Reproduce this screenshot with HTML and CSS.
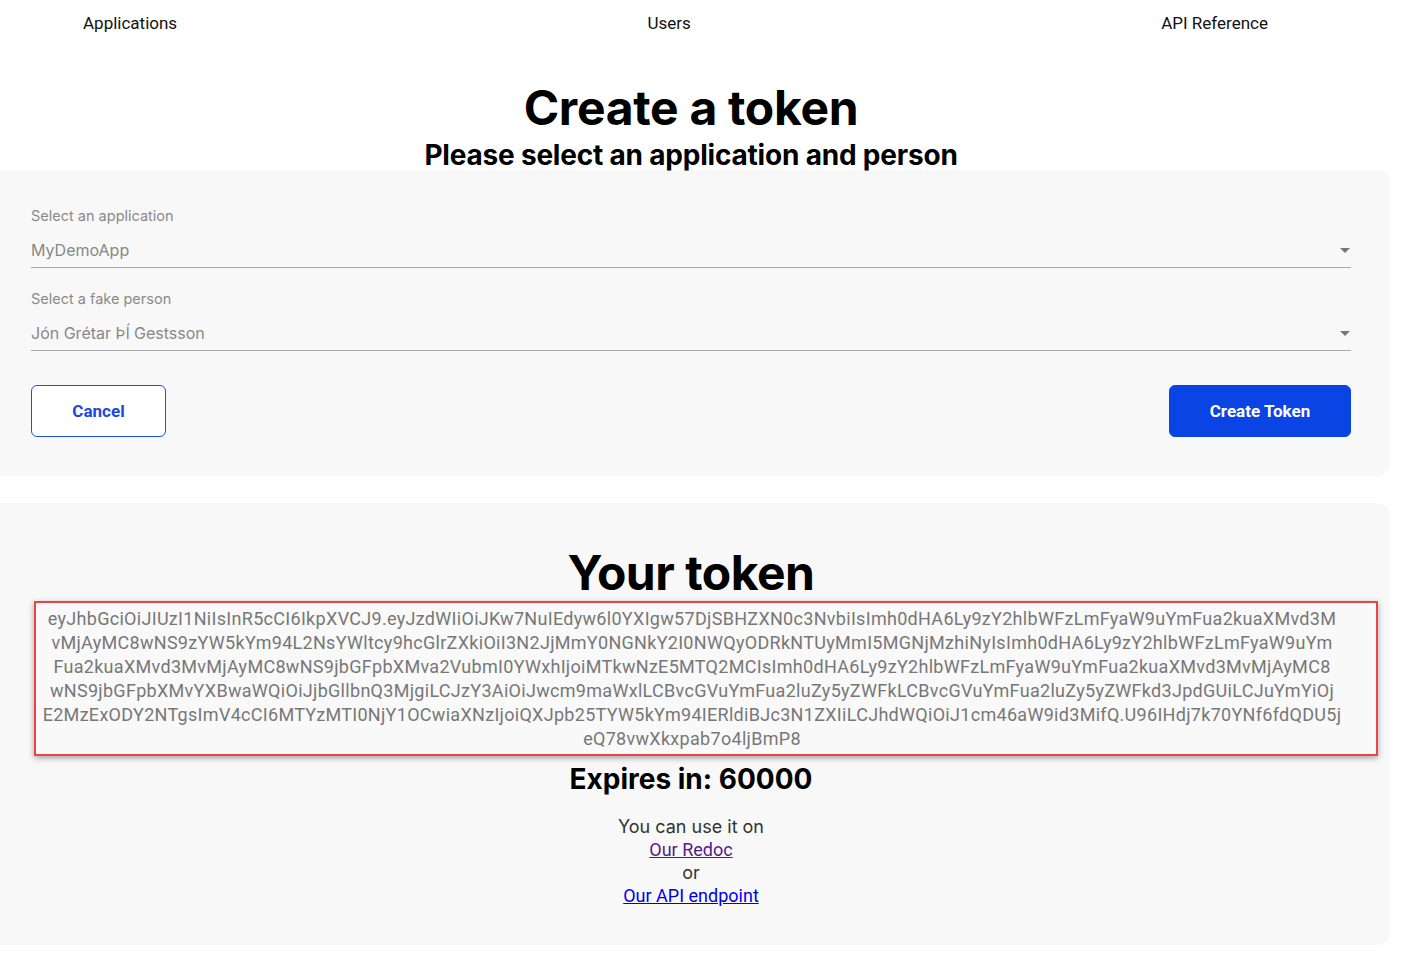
FILE: index.html
```html
<!DOCTYPE html>
<html lang="en">
<head>
<meta charset="utf-8">
<title>Create a token</title>
<link rel="stylesheet" href="styles.css">
</head>
<body>
<nav class="topnav">
  <a class="nav-link" href="#">Applications</a>
  <a class="nav-link" href="#">Users</a>
  <a class="nav-link" href="#">API Reference</a>
</nav>

<header class="page-head">
  <h1 class="page-title">Create a token</h1>
  <h2 class="page-subtitle">Please select an application and person</h2>
</header>

<section class="card form-card">
  <div class="field">
    <label class="field-label">Select an application</label>
    <div class="select">
      <span class="select-value">MyDemoApp</span>
      <span class="select-arrow"></span>
    </div>
  </div>
  <div class="field">
    <label class="field-label">Select a fake person</label>
    <div class="select">
      <span class="select-value">Jón Grétar Þĺ Gestsson</span>
      <span class="select-arrow"></span>
    </div>
  </div>
  <div class="actions">
    <button class="btn btn-outline">Cancel</button>
    <button class="btn btn-primary">Create Token</button>
  </div>
</section>

<section class="card token-card">
  <h1 class="token-title">Your token</h1>
  <div class="token-box">eyJhbGciOiJIUzI1NiIsInR5cCI6IkpXVCJ9.eyJzdWIiOiJKw7NuIEdyw6l0YXIgw57DjSBHZXN0c3NvbiIsImh0dHA6Ly9zY2hlbWFzLmFyaW9uYmFua2kuaXMvd3M<wbr>vMjAyMC8wNS9zYW5kYm94L2NsYWltcy9hcGlrZXkiOiI3N2JjMmY0NGNkY2I0NWQyODRkNTUyMmI5MGNjMzhiNyIsImh0dHA6Ly9zY2hlbWFzLmFyaW9uYm<wbr>Fua2kuaXMvd3MvMjAyMC8wNS9jbGFpbXMva2VubmI0YWxhIjoiMTkwNzE5MTQ2MCIsImh0dHA6Ly9zY2hlbWFzLmFyaW9uYmFua2kuaXMvd3MvMjAyMC8<wbr>wNS9jbGFpbXMvYXBwaWQiOiJjbGllbnQ3MjgiLCJzY3AiOiJwcm9maWxlLCBvcGVuYmFua2luZy5yZWFkLCBvcGVuYmFua2luZy5yZWFkd3JpdGUiLCJuYmYiOj<wbr>E2MzExODY2NTgsImV4cCI6MTYzMTI0NjY1OCwiaXNzIjoiQXJpb25TYW5kYm94IERldiBJc3N1ZXIiLCJhdWQiOiJ1cm46aW9id3MifQ.U96IHdj7k70YNf6fdQDU5j<wbr>eQ78vwXkxpab7o4ljBmP8</div>
  <h2 class="expires">Expires in: 60000</h2>
  <div class="usage">
    <div>You can use it on</div>
    <div><a class="link visited" href="#">Our Redoc</a></div>
    <div>or</div>
    <div><a class="link" href="#">Our API endpoint</a></div>
  </div>
</section>
</body>
</html>
```

FILE: styles.css
```css
html, body {
  margin: 0;
  padding: 0;
  background: #ffffff;
}

body {
  font-family: Roboto, "Liberation Sans", sans-serif;
  color: #000;
}

.topnav {
  display: flex;
  justify-content: space-between;
  padding: 13px 136px 0 83px;
  height: 33px;
  box-sizing: border-box;
}

.nav-link {
  font-family: Roboto, sans-serif;
  font-size: 17px;
  line-height: 20px;
  color: #111;
  text-decoration: none;
}

.page-head {
  text-align: center;
  padding: 47px 22px 0 0;
}

.page-title {
  margin: 0;
  font-family: Inter, "Noto Sans", sans-serif;
  font-size: 48px;
  line-height: 56px;
  font-weight: 700;
  letter-spacing: -0.3px;
}

.page-subtitle {
  margin: 5px 0 0;
  font-family: Inter, "Noto Sans", sans-serif;
  font-size: 28px;
  line-height: 29px;
  font-weight: 700;
  letter-spacing: -0.2px;
}

.card {
  background: #f8f8f8;
  margin-right: 14px;
  border-radius: 0 12px 12px 0;
  box-sizing: border-box;
}

.form-card {
  padding: 37px 39px 39px 31px;
}

.field + .field {
  margin-top: 22px;
}

.field-label {
  display: block;
  font-family: Inter, "Noto Sans", sans-serif;
  font-size: 14.5px;
  line-height: 18px;
  color: #8a8a8a;
}

.select {
  display: flex;
  align-items: center;
  justify-content: space-between;
  margin-top: 8px;
  padding: 7px 0;
  border-bottom: 1px solid #a9a9a9;
}

.select-value {
  font-family: Inter, "Noto Sans", sans-serif;
  font-size: 16px;
  line-height: 20px;
  color: #888;
}

.select-arrow {
  width: 0;
  height: 0;
  border-left: 5px solid transparent;
  border-right: 5px solid transparent;
  border-top: 5px solid #777;
  margin-right: 1px;
}

.actions {
  display: flex;
  justify-content: space-between;
  margin-top: 34px;
}

.btn {
  height: 52px;
  border-radius: 6px;
  font-family: Roboto, sans-serif;
  font-size: 17px;
  font-weight: 700;
  cursor: pointer;
}

.btn-outline {
  width: 135px;
  background: #ffffff;
  border: 1px solid #1d4ee6;
  color: #1d48e0;
}

.btn-primary {
  width: 182px;
  background: #0a44e4;
  border: 1px solid #0a44e4;
  color: #ffffff;
}

.token-card {
  margin-top: 27px;
  padding: 42px 39px 37px 31px;
  text-align: center;
  height: 442px;
}

.token-title {
  margin: 0;
  font-family: Inter, "Noto Sans", sans-serif;
  font-size: 48px;
  line-height: 56px;
  font-weight: 700;
  letter-spacing: -0.5px;
}

.token-box {
  margin: 0 -27px 0 3px;
  padding: 4px 32px 3px 4px;
  border: 2px solid #ea4449;
  background: #f9f9f9;
  box-shadow: 0 2px 6px rgba(0, 0, 0, 0.35);
  font-family: Roboto, sans-serif;
  font-size: 18px;
  line-height: 24px;
  letter-spacing: 0.3px;
  color: #777;
  word-break: normal;
  overflow-wrap: anywhere;
  text-align: center;
}

.expires {
  margin: 8px 0 0;
  font-family: Inter, "Noto Sans", sans-serif;
  font-size: 28px;
  line-height: 30px;
  font-weight: 700;
}

.usage {
  margin-top: 21px;
  font-family: Inter, "Noto Sans", sans-serif;
  font-size: 18px;
  line-height: 23px;
  color: #333;
}

.link {
  font-family: Roboto, sans-serif;
  color: #0000ee;
  text-decoration: underline;
}

.link.visited {
  color: #551a8b;
}
```
